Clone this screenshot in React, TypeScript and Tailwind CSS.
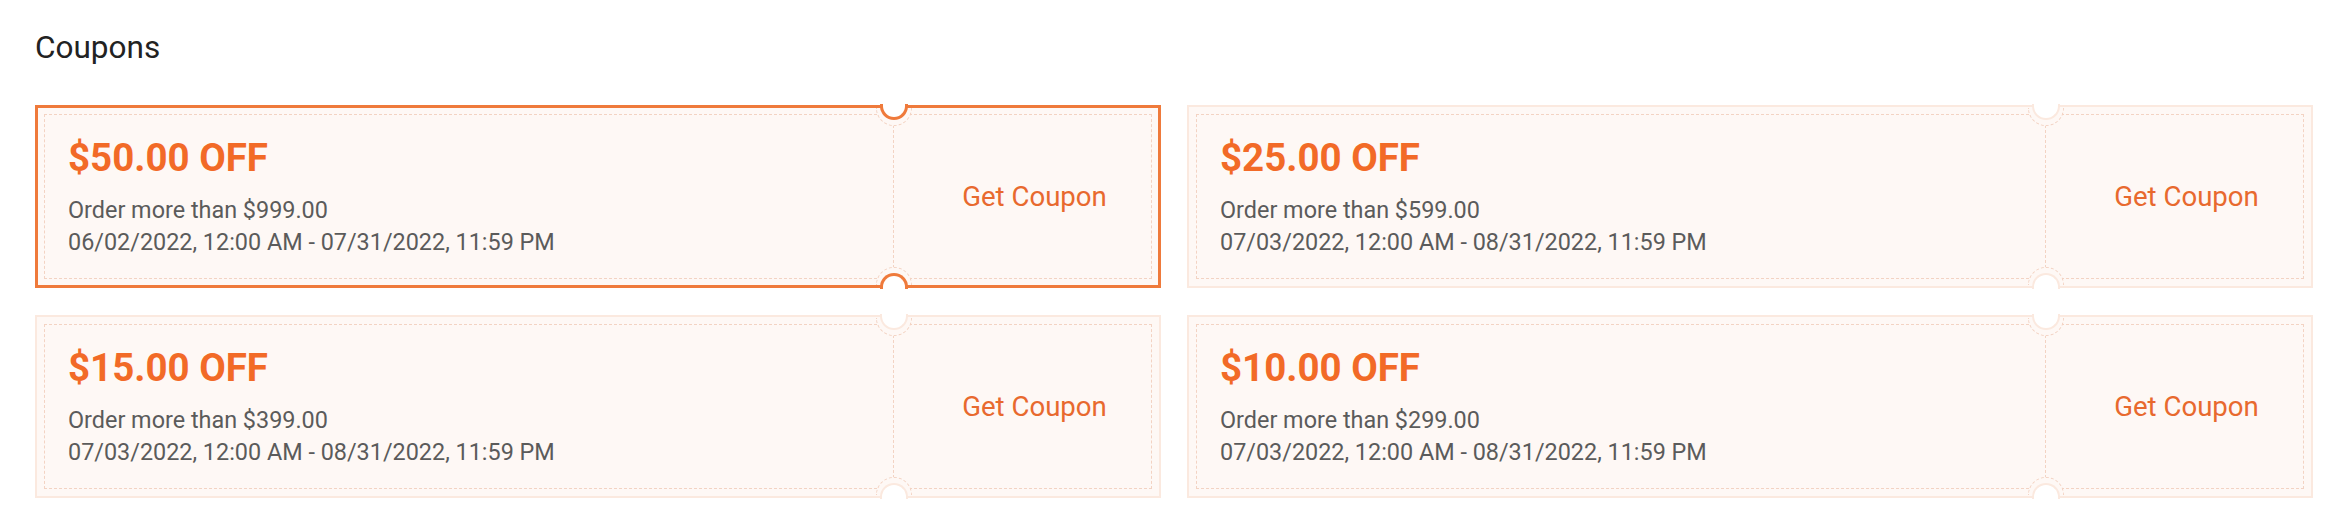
import React from "react";

type Coupon = {
  id: number;
  amount: string;
  min: string;
  period: string;
  active?: boolean;
};

const coupons: Coupon[] = [
  {
    id: 1,
    amount: "$50.00 OFF",
    min: "Order more than $999.00",
    period: "06/02/2022, 12:00 AM - 07/31/2022, 11:59 PM",
    active: true,
  },
  {
    id: 2,
    amount: "$25.00 OFF",
    min: "Order more than $599.00",
    period: "07/03/2022, 12:00 AM - 08/31/2022, 11:59 PM",
  },
  {
    id: 3,
    amount: "$15.00 OFF",
    min: "Order more than $399.00",
    period: "07/03/2022, 12:00 AM - 08/31/2022, 11:59 PM",
  },
  {
    id: 4,
    amount: "$10.00 OFF",
    min: "Order more than $299.00",
    period: "07/03/2022, 12:00 AM - 08/31/2022, 11:59 PM",
  },
];

const CouponCard: React.FC<{ coupon: Coupon }> = ({ coupon }) => {
  const active = !!coupon.active;

  return (
    <div
      className={`h-[183px] bg-[#fef8f5] flex ${
        active
          ? "border-[3px] border-[#ef7a3b] p-[6px]"
          : "border-2 border-[#fbe9df] p-[7px]"
      }`}
    >
      <div className="flex flex-1 flex-row border border-dashed border-[#f3d3c3]">
        <div className="flex flex-1 flex-col justify-center pl-[23px]">
          <h2 className="text-[38.5px] leading-[44px] font-bold text-[#f26a27]">
            {coupon.amount}
          </h2>
          <p className="mt-[14px] text-[23.4px] leading-[32px] text-[#5b5b5b]">
            {coupon.min}
          </p>
          <p className="text-[23.4px] leading-[32px] text-[#5b5b5b]">
            {coupon.period}
          </p>
        </div>
        <div className="relative w-[258px] flex items-center justify-center border-l border-dashed border-[#f3d3c3]">
          {/* dashed arcs around the notches */}
          <span className="absolute -top-[7px] -left-[18px] w-[36px] h-[18px] rounded-b-full bg-[#fef8f5] border border-t-0 border-dashed border-[#f3d3c3]" />
          <span className="absolute -bottom-[7px] -left-[18px] w-[36px] h-[18px] rounded-t-full bg-[#fef8f5] border border-b-0 border-dashed border-[#f3d3c3]" />
          {/* notches */}
          <span
            className={`absolute -top-[11px] -left-[14px] w-[28px] h-[16px] rounded-b-full bg-white border-t-0 ${
              active
                ? "border-[3px] border-[#ef7a3b]"
                : "border-2 border-[#fbe9df]"
            }`}
          />
          <span
            className={`absolute -bottom-[11px] -left-[14px] w-[28px] h-[16px] rounded-t-full bg-white border-b-0 ${
              active
                ? "border-[3px] border-[#ef7a3b]"
                : "border-2 border-[#fbe9df]"
            }`}
          />
          <button className="text-[27.6px] leading-[32px] text-[#e8692e] ml-[24px]">
            Get Coupon
          </button>
        </div>
      </div>
    </div>
  );
};

export default function App() {
  return (
    <div
      className="w-[2334px] h-[514px] bg-white pt-[29px] pl-[35px] pr-[21px]"
      style={{ fontFamily: "Roboto, 'Noto Sans', sans-serif" }}
    >
      <h1 className="text-[31.5px] leading-[37px] text-[#222222]">Coupons</h1>
      <div className="mt-[39px] grid grid-cols-2 gap-x-[26px] gap-y-[27px]">
        {coupons.map((c) => (
          <CouponCard key={c.id} coupon={c} />
        ))}
      </div>
    </div>
  );
}
